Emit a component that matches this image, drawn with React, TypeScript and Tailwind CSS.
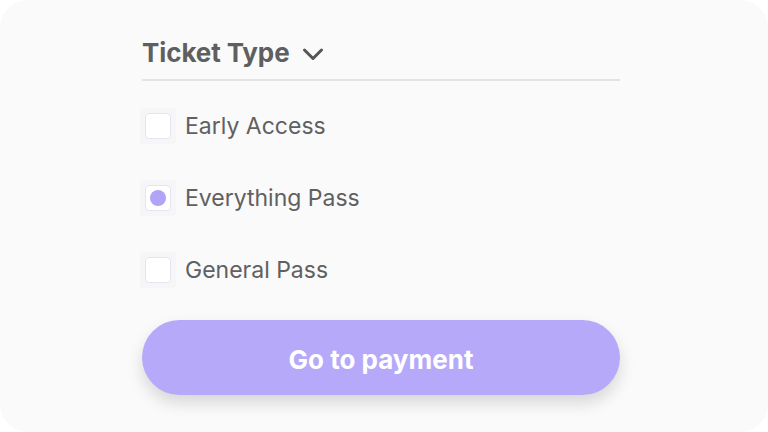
import React, { useState } from 'react';

const options = ['Early Access', 'Everything Pass', 'General Pass'];

const ChevronDown = () => (
  <svg width="22" height="14" viewBox="0 0 22 14" fill="none" stroke="currentColor" strokeWidth="3" strokeLinecap="round" strokeLinejoin="round">
    <path d="M2.5 3l8.5 8.5 8.5-8.5" />
  </svg>
);

export default function App() {
  const [selected, setSelected] = useState('Everything Pass');

  return (
    <div className="w-[768px] h-[432px] bg-white" style={{ fontFamily: 'Inter, "Noto Sans", sans-serif' }}>
      <div className="w-full h-full bg-[#fafafa] rounded-[28px] flex pl-[142px]">
        <div className="w-[478px] pt-[35px] flex flex-col">
          {/* Header */}
          <div className="flex items-center gap-[12px] h-[34px] text-[#5f5f5f]">
            <span className="text-[26px] font-bold tracking-[-0.1px]">Ticket Type</span>
            <span className="mt-[3px] text-[#555]"><ChevronDown /></span>
          </div>
          <div className="mt-[10px] h-[2px] bg-[#e3e3e3]" />

          {/* Options */}
          <div className="mt-[26px] flex flex-col gap-[34px]">
            {options.map((opt) => {
              const on = selected === opt;
              return (
                <button
                  key={opt}
                  onClick={() => setSelected(opt)}
                  className="flex items-center gap-[9px] h-[38px] text-left"
                >
                  <span className="w-[36px] h-[36px] -ml-[2px] flex items-center justify-center bg-[#f6f6f8] rounded-[4px]">
                    <span className="w-[26px] h-[26px] bg-white border border-[#e4e4ee] rounded-[4px] flex items-center justify-center">
                      {on && <span className="w-[16px] h-[16px] rounded-full bg-[#b1a3f6]" />}
                    </span>
                  </span>
                  <span className="text-[23px] text-[#606060] leading-none">{opt}</span>
                </button>
              );
            })}
          </div>

          {/* Button */}
          <button className="mt-[31px] h-[75px] w-full pt-[3px] rounded-full bg-[#b7a9f9] text-white text-[26px] font-bold shadow-[0_8px_16px_rgba(0,0,0,0.14)]">
            Go to payment
          </button>
        </div>
      </div>
    </div>
  );
}
